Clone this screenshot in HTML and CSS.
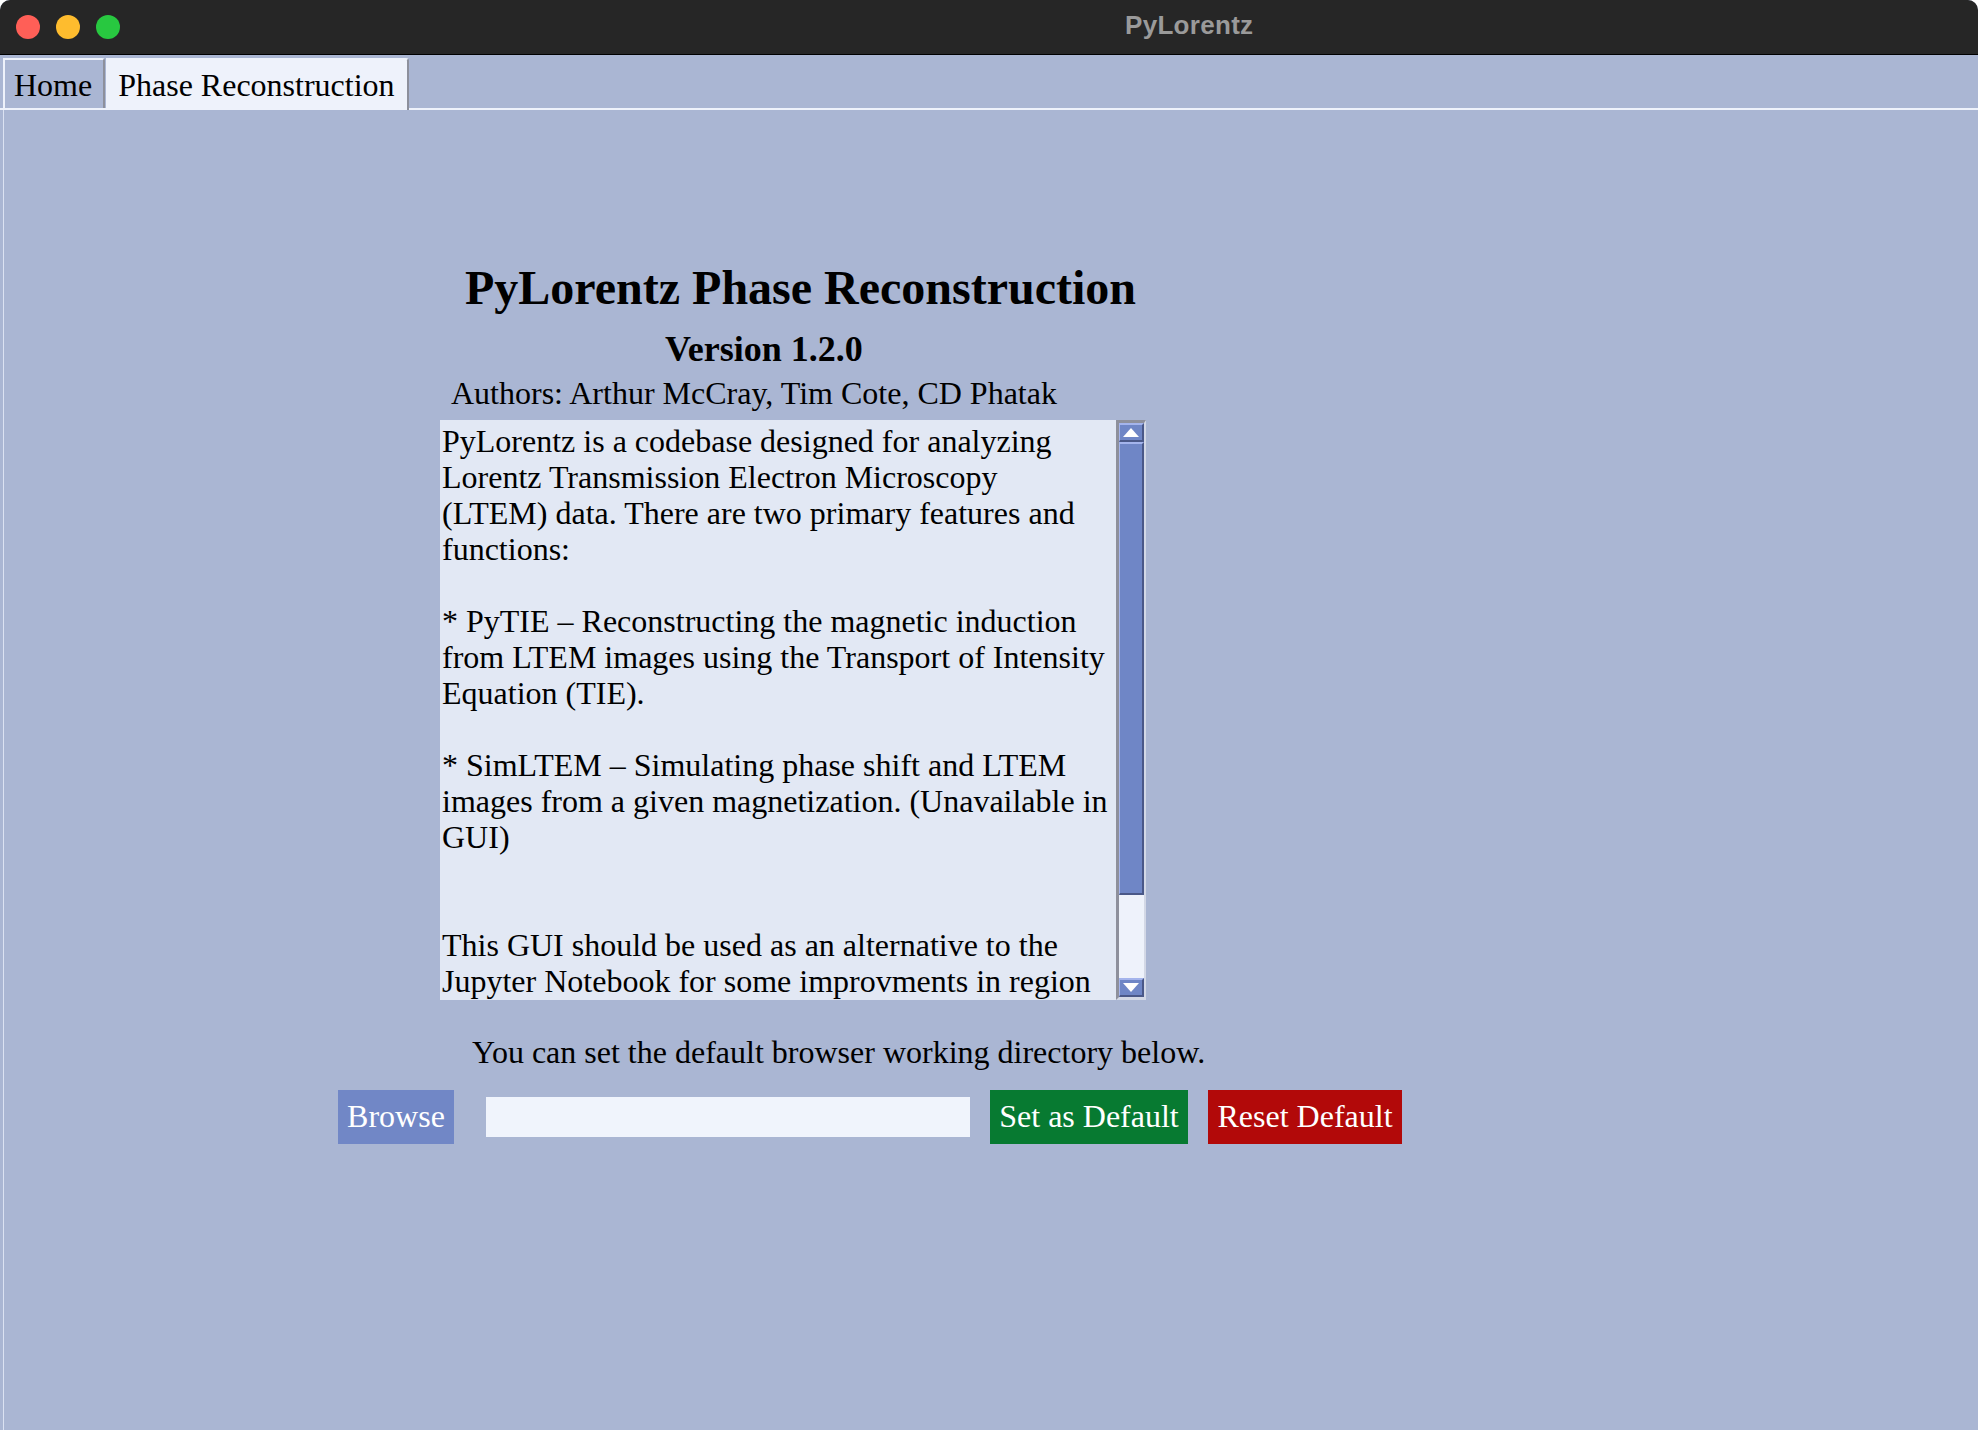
FILE: index.html
```html
<!DOCTYPE html>
<html lang="en">
<head>
<meta charset="utf-8">
<title>PyLorentz</title>
<link rel="stylesheet" href="styles.css">
</head>
<body>
<div class="window">
  <header class="titlebar">
    <div class="lights">
      <span class="light light-red"></span>
      <span class="light light-yellow"></span>
      <span class="light light-green"></span>
    </div>
    <div class="window-title">PyLorentz</div>
  </header>

  <nav class="tabs">
    <div class="tab">Home</div>
    <div class="tab tab-active">Phase Reconstruction</div>
  </nav>

  <main class="panel">
    <h1 class="title">PyLorentz Phase Reconstruction</h1>
    <h2 class="version">Version 1.2.0</h2>
    <p class="authors">Authors: Arthur McCray, Tim Cote, CD Phatak</p>

    <div class="about">
      <div class="about-text">PyLorentz is a codebase designed for analyzing
Lorentz Transmission Electron Microscopy
(LTEM) data. There are two primary features and
functions:

* PyTIE – Reconstructing the magnetic induction
from LTEM images using the Transport of Intensity
Equation (TIE).

* SimLTEM – Simulating phase shift and LTEM
images from a given magnetization. (Unavailable in
GUI)


This GUI should be used as an alternative to the
Jupyter Notebook for some improvments in region</div>
      <div class="scrollbar">
        <div class="sb-btn">
          <svg class="sb-arrow" width="16" height="9" viewBox="0 0 16 9"><polygon points="8,0 16,9 0,9" fill="#ffffff"/></svg>
        </div>
        <div class="sb-thumb"></div>
        <div class="sb-trough"></div>
        <div class="sb-btn">
          <svg class="sb-arrow" width="16" height="9" viewBox="0 0 16 9"><polygon points="0,0 16,0 8,9" fill="#ffffff"/></svg>
        </div>
      </div>
    </div>

    <p class="note">You can set the default browser working directory below.</p>

    <div class="dir-row">
      <button class="btn btn-browse">Browse</button>
      <input class="dir-input" type="text" value="">
      <button class="btn btn-set">Set as Default</button>
      <button class="btn btn-reset">Reset Default</button>
    </div>
  </main>
</div>
</body>
</html>
```

FILE: styles.css
```css
* {
  box-sizing: border-box;
}

html, body {
  margin: 0;
  padding: 0;
  background: #ffffff;
}

body {
  width: 1978px;
  height: 1430px;
  overflow: hidden;
  font-family: "Liberation Serif", "Times New Roman", serif;
  color: #000000;
}

.window {
  width: 1978px;
  height: 1430px;
  background: #aab6d3;
  border-top-left-radius: 10px;
  border-top-right-radius: 10px;
  overflow: hidden;
  display: flex;
  flex-direction: column;
}

/* ---------- title bar ---------- */
.titlebar {
  height: 55px;
  flex: 0 0 55px;
  background: #262626;
  border-bottom: 1px solid #000000;
  display: flex;
  align-items: center;
  padding-left: 16px;
  padding-bottom: 3px;
}

.lights {
  display: flex;
  gap: 16px;
  margin-top: 2px;
}

.light {
  width: 24px;
  height: 24px;
  border-radius: 50%;
  display: block;
}

.light-red { background: #ff5f57; }
.light-yellow { background: #febc2e; }
.light-green { background: #28c840; }

.window-title {
  margin-left: 1005px;
  font-family: "Liberation Sans", Arial, sans-serif;
  font-weight: bold;
  font-size: 26px;
  color: #9a9a9a;
  letter-spacing: 0.3px;
}

/* ---------- tabs ---------- */
.tabs {
  display: flex;
  padding: 3px 0 0 3px;
  border-bottom: 2px solid #eef2fb;
  flex: 0 0 auto;
}

.tab {
  height: 50px;
  font-size: 32px;
  line-height: 36px;
  padding: 7px 11px 5px 9px;
  border-top: 2px solid #eef2fb;
  border-left: 2px solid #eef2fb;
  border-right: 2px solid #8d909c;
  border-top-right-radius: 3px;
  background: #aab6d3;
  white-space: nowrap;
}

.tab-active {
  background: #eef2fb;
  border-left: 0;
  padding: 7px 12px 7px 12px;
  margin-left: 1px;
  height: 52px;
  margin-bottom: -2px;
}

/* ---------- main panel ---------- */
.panel {
  flex: 1 1 auto;
  margin-left: 3px;
  border-left: 1px solid #dbe2f2;
  padding-top: 150px;
  display: flex;
  flex-direction: column;
  align-items: flex-start;
}

.title {
  margin: 0 0 0 461px;
  font-size: 48px;
  line-height: 56px;
  font-weight: bold;
  white-space: nowrap;
}

.version {
  margin: 12px 0 0 661px;
  font-size: 36px;
  line-height: 42px;
  font-weight: bold;
  white-space: nowrap;
}

.authors {
  margin: 5px 0 0 447px;
  font-size: 32px;
  line-height: 36px;
  white-space: nowrap;
}

/* ---------- about box ---------- */
.about {
  margin: 9px 0 0 436px;
  width: 706px;
  height: 580px;
  display: flex;
  background: #e2e8f4;
}

.about-text {
  flex: 1 1 auto;
  overflow: hidden;
  white-space: pre;
  font-size: 32px;
  line-height: 36px;
  padding: 3px 0 0 2px;
}

.scrollbar {
  flex: 0 0 30px;
  width: 30px;
  height: 580px;
  border-left: 3px solid #8e909c;
  border-top: 3px solid #8e909c;
  border-right: 2px solid #d3d8e6;
  border-bottom: 3px solid #d3d8e6;
  background: #eef2fb;
  display: flex;
  flex-direction: column;
}

.sb-btn {
  flex: 0 0 19px;
  height: 19px;
  background: #6f86c6;
  border-top: 2px solid #a4b4ec;
  border-left: 1px solid #a4b4ec;
  border-right: 2px solid #4a5888;
  border-bottom: 2px solid #4a5888;
  display: flex;
  align-items: center;
  justify-content: center;
}

.sb-arrow {
  display: block;
}

.sb-thumb {
  flex: 0 0 453px;
  background: #6f86c6;
  border-top: 2px solid #a4b4ec;
  border-left: 1px solid #a4b4ec;
  border-right: 2px solid #4a5888;
  border-bottom: 2px solid #4a5888;
}

.sb-trough {
  flex: 1 1 auto;
  background: #eef2fb;
}

/* ---------- directory row ---------- */
.note {
  margin: 34px 0 0 468px;
  font-size: 32px;
  line-height: 36px;
  white-space: nowrap;
}

.dir-row {
  margin: 20px 0 0 334px;
  display: flex;
  align-items: center;
}

.btn {
  font-family: "Liberation Serif", "Times New Roman", serif;
  font-size: 32px;
  line-height: 36px;
  height: 54px;
  padding: 8px 0 10px 0;
  text-align: center;
  border: 0;
  border-radius: 0;
  color: #ffffff;
  white-space: nowrap;
  cursor: pointer;
}

.btn-browse {
  width: 116px;
  background: #7187c6;
  margin-right: 32px;
}

.btn-set {
  width: 198px;
  background: #077a31;
  margin-right: 20px;
}

.btn-reset {
  width: 194px;
  background: #b20909;
}

.dir-input {
  width: 484px;
  height: 40px;
  border: 0;
  background: #f0f4fc;
  margin: 0 20px 0 0;
  padding: 0 4px;
  font-family: "Liberation Serif", "Times New Roman", serif;
  font-size: 28px;
  outline: none;
}
```
